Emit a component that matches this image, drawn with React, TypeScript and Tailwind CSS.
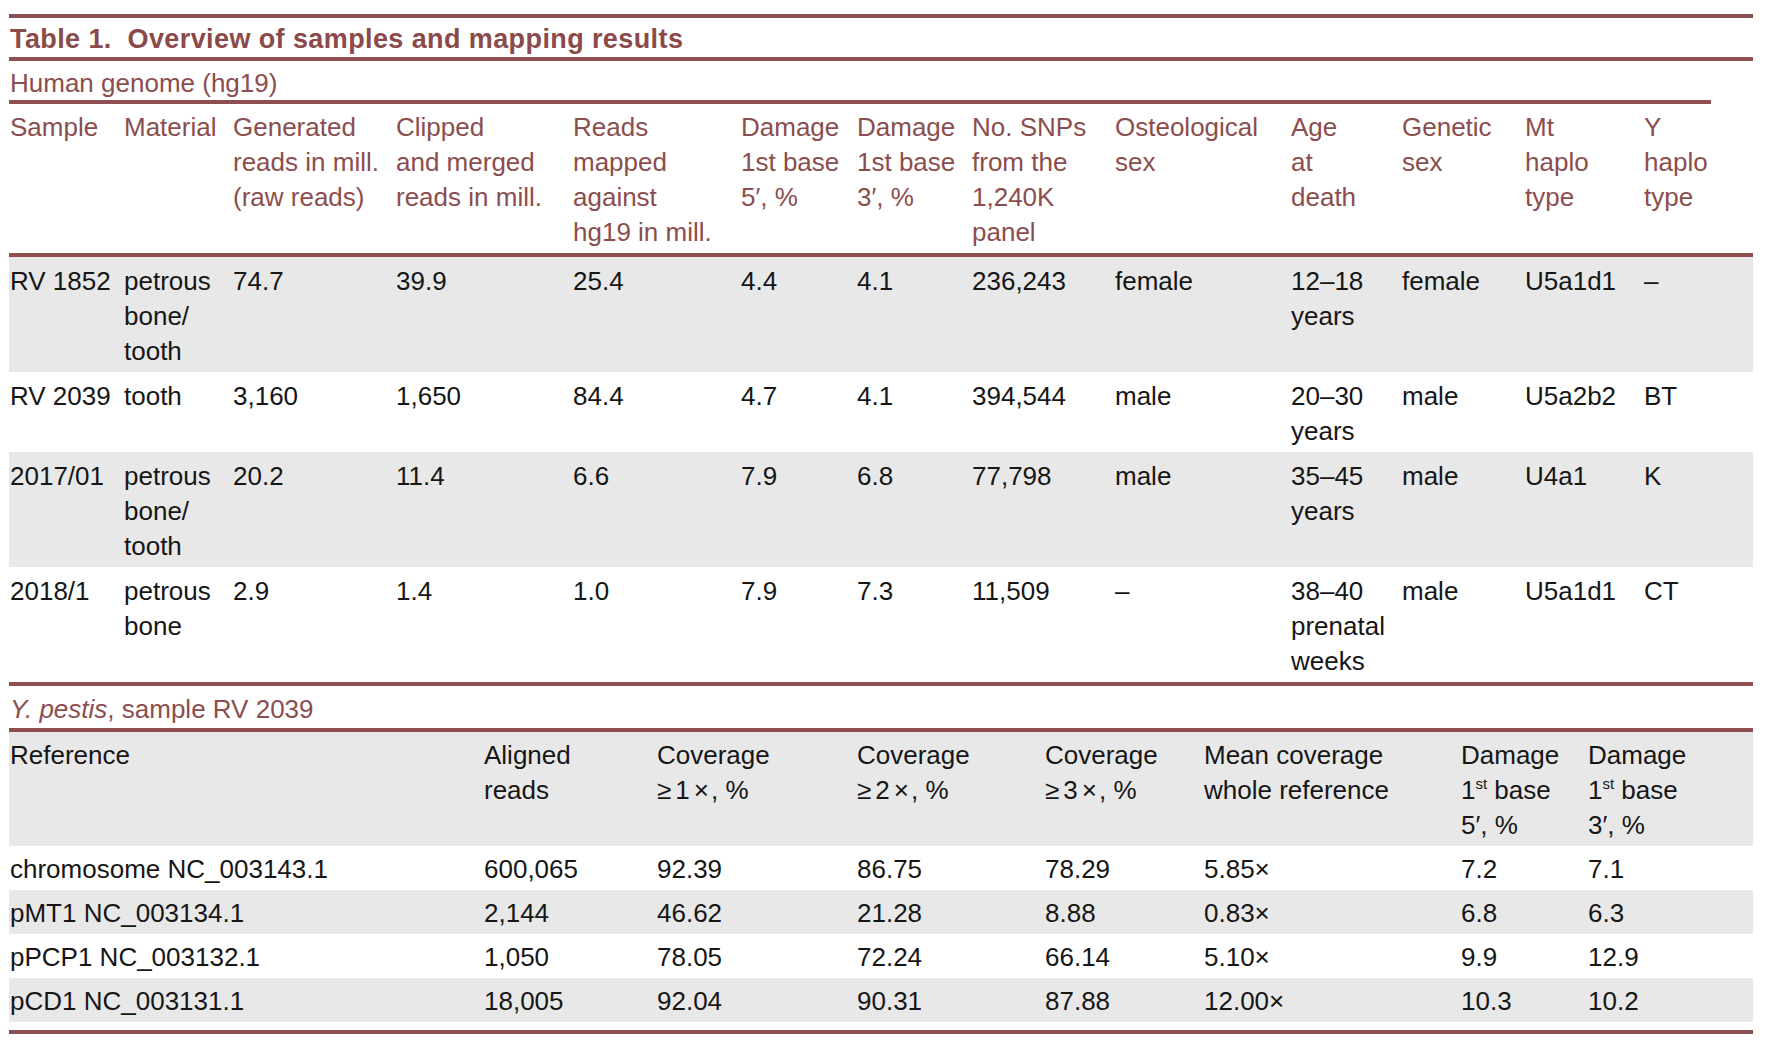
import type { ReactNode } from 'react';

type Cell = ReactNode[];

const dmg = (end: string) => ['Damage', '1st base', `${end}′, %`];
const dmgSup = (end: string) => [
  'Damage',
  <>1<sup className="text-[15px] top-[-0.7em]">st</sup> base</>,
  `${end}′, %`,
];
const cov = (n: string) => [
  'Coverage',
  <><span className="tracking-[4px]">≥{n}</span><span className="tracking-[2px]">×</span>, %</>,
];

const head1: Cell[] = [
  ['Sample'],
  ['Material'],
  ['Generated', 'reads in mill.', '(raw reads)'],
  ['Clipped', 'and merged', 'reads in mill.'],
  ['Reads', 'mapped', 'against', 'hg19 in mill.'],
  dmg('5'),
  dmg('3'),
  ['No. SNPs', 'from the', '1,240K', 'panel'],
  ['Osteological', 'sex'],
  ['Age', 'at', 'death'],
  ['Genetic', 'sex'],
  ['Mt', 'haplo', 'type'],
  ['Y', 'haplo', 'type'],
];

const rows1: { gray: boolean; cells: Cell[] }[] = [
  { gray: true, cells: [['RV 1852'], ['petrous', 'bone/', 'tooth'], ['74.7'], ['39.9'], ['25.4'], ['4.4'], ['4.1'], ['236,243'], ['female'], ['12–18', 'years'], ['female'], ['U5a1d1'], ['–']] },
  { gray: false, cells: [['RV 2039'], ['tooth'], ['3,160'], ['1,650'], ['84.4'], ['4.7'], ['4.1'], ['394,544'], ['male'], ['20–30', 'years'], ['male'], ['U5a2b2'], ['BT']] },
  { gray: true, cells: [['2017/01'], ['petrous', 'bone/', 'tooth'], ['20.2'], ['11.4'], ['6.6'], ['7.9'], ['6.8'], ['77,798'], ['male'], ['35–45', 'years'], ['male'], ['U4a1'], ['K']] },
  { gray: false, cells: [['2018/1'], ['petrous', 'bone'], ['2.9'], ['1.4'], ['1.0'], ['7.9'], ['7.3'], ['11,509'], ['–'], ['38–40', 'prenatal', 'weeks'], ['male'], ['U5a1d1'], ['CT']] },
];

const head2: Cell[] = [
  ['Reference'],
  ['Aligned', 'reads'],
  cov('1'),
  cov('2'),
  cov('3'),
  ['Mean coverage', 'whole reference'],
  dmgSup('5'),
  dmgSup('3'),
];

const rows2: string[][] = [
  ['chromosome NC_003143.1', '600,065', '92.39', '86.75', '78.29', '5.85×', '7.2', '7.1'],
  ['pMT1 NC_003134.1', '2,144', '46.62', '21.28', '8.88', '0.83×', '6.8', '6.3'],
  ['pPCP1 NC_003132.1', '1,050', '78.05', '72.24', '66.14', '5.10×', '9.9', '12.9'],
  ['pCD1 NC_003131.1', '18,005', '92.04', '90.31', '87.88', '12.00×', '10.3', '10.2'],
];

function Lines({ lines }: { lines: Cell }) {
  return (
    <div className="pl-[1px] whitespace-nowrap">
      {lines.map((l, i) => <div key={i}>{l}</div>)}
    </div>
  );
}

function Rule({ short }: { short?: boolean }) {
  return <div className={short ? 'h-[4px] w-[1702px] bg-[#8d4f4f]' : 'h-[4px] w-full bg-[#8d4f4f]'} />;
}

export default function App() {
  return (
    <div className="min-h-[1056px] bg-white pt-[14px] pl-[9px] font-['Liberation_Sans',Arial,sans-serif] text-[26px] leading-[35px] text-[#161616]">
      <div className="w-[1744px]">
        <Rule />
        <div className="h-[39px] pt-[3px] pl-[1px] text-[27px] leading-[36px] font-bold tracking-[0.4px] text-[#8b4a4a]">
          Table 1.&nbsp; Overview of samples and mapping results
        </div>
        <Rule />
        <div className="h-[39px] pt-[5px] pl-[1px] leading-[34px] text-[#8b4d4d]">Human genome (hg19)</div>
        <Rule short />

        {/* human genome header */}
        <div className="grid grid-cols-[114px_109px_163px_177px_168px_116px_115px_143px_176px_111px_123px_119px_110px] pt-[6px] pb-[3px] text-[#8b4d4d]">
          {head1.map((c, i) => <Lines key={i} lines={c} />)}
        </div>
        <Rule />
        {rows1.map((r, i) => (
          <div key={i} className={r.gray
            ? 'grid grid-cols-[114px_109px_163px_177px_168px_116px_115px_143px_176px_111px_123px_119px_110px] pt-[7px] pb-[3px] bg-[#e8e8e8]'
            : 'grid grid-cols-[114px_109px_163px_177px_168px_116px_115px_143px_176px_111px_123px_119px_110px] pt-[7px] pb-[3px]'}>
            {r.cells.map((c, j) => <Lines key={j} lines={c} />)}
          </div>
        ))}
        <Rule />

        <div className="pt-[6px] pb-[1px] pl-[1px] text-[#8b4d4d]"><i>Y. pestis</i>, sample RV 2039</div>
        <Rule />
        <div className="grid grid-cols-[474px_173px_200px_188px_159px_257px_127px_166px] pt-[6px] pb-[3px] bg-[#e8e8e8]">
          {head2.map((c, i) => <Lines key={i} lines={c} />)}
        </div>
        {rows2.map((r, i) => (
          <div key={i} className={i % 2 === 1
            ? 'grid grid-cols-[474px_173px_200px_188px_159px_257px_127px_166px] pt-[6px] pb-[3px] bg-[#e8e8e8]'
            : 'grid grid-cols-[474px_173px_200px_188px_159px_257px_127px_166px] pt-[6px] pb-[3px]'}>
            {r.map((c, j) => <Lines key={j} lines={[c]} />)}
          </div>
        ))}
        <div className="h-[8px]" />
        <Rule />
      </div>
    </div>
  );
}
